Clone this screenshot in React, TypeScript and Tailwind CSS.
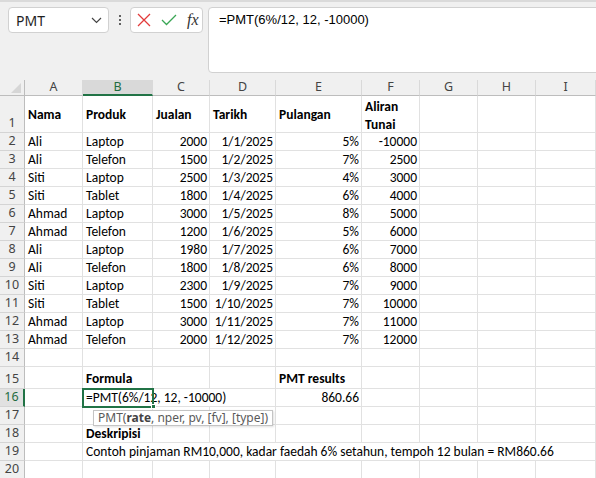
import React from 'react';

const COLS = 'grid grid-cols-[25px_58px_70px_57px_66px_86px_58px_58px_58px_60px]';
const CELL_FONT = { fontFamily: '"Carlito", Lato, "Liberation Sans", sans-serif' };

type Row = [string, string, string, string, string, string];

const DATA: Row[] = [
  ['Ali', 'Laptop', '2000', '1/1/2025', '5%', '-10000'],
  ['Ali', 'Telefon', '1500', '1/2/2025', '7%', '2500'],
  ['Siti', 'Laptop', '2500', '1/3/2025', '4%', '3000'],
  ['Siti', 'Tablet', '1800', '1/4/2025', '6%', '4000'],
  ['Ahmad', 'Laptop', '3000', '1/5/2025', '8%', '5000'],
  ['Ahmad', 'Telefon', '1200', '1/6/2025', '5%', '6000'],
  ['Ali', 'Laptop', '1980', '1/7/2025', '6%', '7000'],
  ['Ali', 'Telefon', '1800', '1/8/2025', '6%', '8000'],
  ['Siti', 'Laptop', '2300', '1/9/2025', '7%', '9000'],
  ['Siti', 'Tablet', '1500', '1/10/2025', '7%', '10000'],
  ['Ahmad', 'Laptop', '3000', '1/11/2025', '7%', '11000'],
  ['Ahmad', 'Telefon', '2000', '1/12/2025', '7%', '12000'],
];

function RowHead({ n, active }: { n: number; active?: boolean }) {
  return (
    <div
      className={`flex items-end justify-center border-b border-[#d4d4d4] pb-[1px] text-[12.5px] leading-[16px] ${
        active
          ? 'border-r-2 border-r-[#217346] bg-[#e1e1e1] text-[#1e6b3f]'
          : 'border-r border-r-[#bdbdbd] bg-[#f0f0f0] text-[#444]'
      }`}
      style={{ fontFamily: '"Noto Sans", "Liberation Sans", sans-serif' }}
    >
      {n}
    </div>
  );
}

function Cell({
  children,
  right,
  bold,
  className = '',
}: {
  children?: React.ReactNode;
  right?: boolean;
  bold?: boolean;
  className?: string;
}) {
  return (
    <div
      className={`flex items-end overflow-hidden whitespace-nowrap border-b border-r border-[#e1e1e1] px-[3px] text-[13.5px] leading-[17px] text-black ${
        right ? 'justify-end pr-[2px]' : ''
      } ${bold ? 'font-bold' : ''} ${className}`}
      style={CELL_FONT}
    >
      {children}
    </div>
  );
}

function EmptyCells({ count }: { count: number }) {
  return (
    <>
      {Array.from({ length: count }).map((_, i) => (
        <Cell key={i} />
      ))}
    </>
  );
}

function Toolbar() {
  return (
    <div className="flex h-[80px] border-t-2 border-[#dadada] bg-[#f0f0f0] pl-[8px] pt-[5px]">
      <div className="flex h-[26px] w-[101px] items-center justify-between rounded-[4px] border border-[#d1d1d1] bg-white pl-[7px] pr-[6px]">
        <span
          className="text-[14px] text-[#1f1f1f]"
          style={{ fontFamily: '"Noto Sans", "Liberation Sans", sans-serif' }}
        >
          PMT
        </span>
        <svg width="11" height="7" viewBox="0 0 11 7" fill="none" stroke="#444" strokeWidth="1.2">
          <path d="M1 1l4.5 4.5L10 1" />
        </svg>
      </div>
      <div className="flex h-[26px] w-[21px] flex-col items-center justify-center gap-[2px]">
        <span className="h-[2px] w-[2px] rounded-full bg-[#333]" />
        <span className="h-[2px] w-[2px] rounded-full bg-[#333]" />
        <span className="h-[2px] w-[2px] rounded-full bg-[#333]" />
      </div>
      <div className="flex h-[26px] w-[73px] items-center gap-[10px] rounded-[4px] border border-[#d1d1d1] bg-white pl-[6px]">
        <svg width="14" height="14" viewBox="0 0 14 14" fill="none" stroke="#e23b3b" strokeWidth="1.3">
          <path d="M1 1l12 12M13 1L1 13" />
        </svg>
        <svg width="16" height="12" viewBox="0 0 16 12" fill="none" stroke="#3aa655" strokeWidth="1.3">
          <path d="M1 6l4.5 4.5L15 1" />
        </svg>
        <span
          className="text-[16px] italic leading-none text-[#333]"
          style={{ fontFamily: '"Liberation Serif", serif' }}
        >
          fx
        </span>
      </div>
      <div
        className="ml-[5px] mr-[-6px] h-[66px] flex-1 rounded-l-[4px] border border-[#d1d1d1] bg-white pl-[10px] pt-[3px] text-[13px] leading-[18px] text-black"
        style={{ fontFamily: '"Liberation Sans", Arial, sans-serif' }}
      >
        =PMT(6%/12, 12, -10000)
      </div>
    </div>
  );
}

function ColumnHeader() {
  const letters = ['A', 'B', 'C', 'D', 'E', 'F', 'G', 'H', 'I'];
  return (
    <div className={`${COLS} h-[16px]`}>
      <div className="relative border-b border-r border-[#bdbdbd] bg-[#f0f0f0]">
        <div className="absolute bottom-[2px] right-[3px] h-0 w-0 border-b-[10px] border-l-[10px] border-b-[#d6d6d6] border-l-transparent" />
      </div>
      {letters.map((l) => (
        <div
          key={l}
          className={`flex items-center justify-center border-r border-[#d9d9d9] text-[12.5px] leading-none ${
            l === 'B'
              ? 'border-b-2 border-b-[#217346] bg-[#d9d9d9] text-[#1e6b3f]'
              : 'border-b border-b-[#bdbdbd] bg-[#f0f0f0] text-[#444]'
          }`}
          style={{ fontFamily: '"Noto Sans", "Liberation Sans", sans-serif' }}
        >
          {l}
        </div>
      ))}
    </div>
  );
}

export default function App() {
  return (
    <div className="h-[478px] w-[596px] overflow-hidden bg-white">
      <Toolbar />
      <ColumnHeader />

      {/* Row 1: headings */}
      <div className={`${COLS} h-[37px]`}>
        <RowHead n={1} />
        <Cell bold className="!items-center">Nama</Cell>
        <Cell bold className="!items-center">Produk</Cell>
        <Cell bold className="!items-center">Jualan</Cell>
        <Cell bold className="!items-center">Tarikh</Cell>
        <Cell bold className="!items-center">Pulangan</Cell>
        <Cell bold className="!items-start !whitespace-normal !leading-[18px] pt-[2px]">
          Aliran Tunai
        </Cell>
        <EmptyCells count={3} />
      </div>

      {DATA.map((r, i) => (
        <div key={i} className={`${COLS} h-[18px]`}>
          <RowHead n={i + 2} />
          <Cell>{r[0]}</Cell>
          <Cell>{r[1]}</Cell>
          <Cell right>{r[2]}</Cell>
          <Cell right>{r[3]}</Cell>
          <Cell right>{r[4]}</Cell>
          <Cell right>{r[5]}</Cell>
          <EmptyCells count={3} />
        </div>
      ))}

      <div className={`${COLS} h-[18px]`}>
        <RowHead n={14} />
        <EmptyCells count={9} />
      </div>

      <div className={`${COLS} h-[22px]`}>
        <RowHead n={15} />
        <Cell />
        <Cell bold className="pb-[1px]">Formula</Cell>
        <Cell />
        <Cell />
        <Cell bold className="pb-[1px]">PMT results</Cell>
        <EmptyCells count={4} />
      </div>

      <div className={`${COLS} h-[18px]`}>
        <RowHead n={16} active />
        <Cell />
        <div className="relative col-span-3 flex items-end whitespace-nowrap border-b border-r border-[#e1e1e1] px-[3px] text-[13.5px] leading-[17px] text-black" style={CELL_FONT}>
          =PMT(6%/12, 12, -10000)
          <div className="pointer-events-none absolute left-[-1px] top-[-1px] h-[20px] w-[72px] border-2 border-[#217346]" />
          <div className="absolute left-[68px] top-[15px] h-[5px] w-[5px] border border-white bg-[#217346]" />
          <div
            className="absolute left-[10px] top-[21px] z-10 whitespace-nowrap border border-[#c4c4c4] bg-white px-[4px] text-[12px] leading-[14px] text-[#5a5a5a] shadow-[1px_1px_2px_rgba(0,0,0,0.12)]"
            style={{ fontFamily: '"Noto Sans", "Liberation Sans", sans-serif' }}
          >
            PMT(<b className="font-bold text-[#444]">rate</b>, nper, pv, [fv], [type])
          </div>
        </div>
        <Cell right>860.66</Cell>
        <EmptyCells count={4} />
      </div>

      <div className={`${COLS} h-[18px]`}>
        <RowHead n={17} />
        <EmptyCells count={9} />
      </div>

      <div className={`${COLS} h-[18px]`}>
        <RowHead n={18} />
        <Cell />
        <Cell bold className="!leading-[15px] pb-[1px]">Deskripisi</Cell>
        <EmptyCells count={7} />
      </div>

      <div className={`${COLS} h-[18px]`}>
        <RowHead n={19} />
        <Cell />
        <Cell className="col-span-8 !overflow-visible">
          Contoh pinjaman RM10,000, kadar faedah 6% setahun, tempoh 12 bulan = RM860.66
        </Cell>
      </div>

      <div className={`${COLS} h-[18px]`}>
        <RowHead n={20} />
        <EmptyCells count={9} />
      </div>
    </div>
  );
}
